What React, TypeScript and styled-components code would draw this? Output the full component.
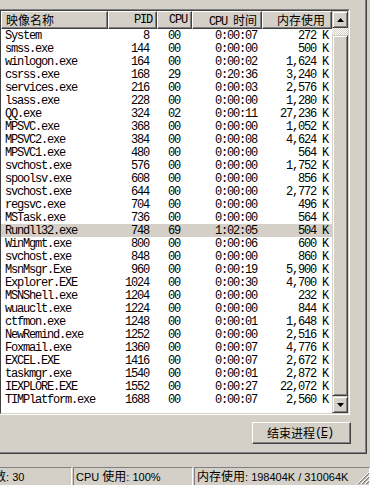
import React from "react";
import styled, { createGlobalStyle } from "styled-components";

const MONO = `"Liberation Mono", "DejaVu Sans Mono", monospace`;
const CJK = `"Noto Sans CJK SC", "Noto Sans", sans-serif`;
const SANS = `"Liberation Sans", "Noto Sans CJK SC", sans-serif`;

const GlobalStyle = createGlobalStyle`
  html, body { margin: 0; padding: 0; }
  body {
    width: 370px;
    height: 485px;
    overflow: hidden;
    background: #d4d0c8;
    font-family: ${MONO};
    color: #000;
  }
  * { box-sizing: border-box; }
`;

const Window = styled.div`
  width: 370px;
  height: 485px;
  display: flex;
  flex-direction: column;
  background: #d4d0c8;
  overflow: hidden;
`;

const TabFrame = styled.div`
  margin-right: 3px;
  border-right: 1px solid #404040;
  border-bottom: 1px solid #404040;
`;

const TabPage = styled.div`
  border-right: 1px solid #808080;
  border-bottom: 1px solid #808080;
  padding: 9px 14px 8px 0;
  display: flex;
  flex-direction: column;
  align-items: flex-start;
`;

const ListOuter = styled.div`
  margin-left: -1px;
  width: 351px;
  border: 1px solid;
  border-color: #808080 #ffffff #ffffff #808080;
`;

const ListInner = styled.div`
  display: flex;
  border: 1px solid;
  border-color: #404040 #d4d0c8 #d4d0c8 #404040;
`;

const ListMain = styled.div`
  width: 331px;
  display: flex;
  flex-direction: column;
  background: #ffffff;
`;

const Header = styled.div`
  display: flex;
  height: 18px;
  background: #d4d0c8;
`;

const HeaderCell = styled.div<{ $w: number; $align: "left" | "right"; $pad: number }>`
  width: ${(p) => p.$w}px;
  flex: none;
  height: 18px;
  border-top: 1px solid #ffffff;
  border-left: 1px solid #ffffff;
  border-right: 1px solid #404040;
  border-bottom: 1px solid #404040;
  box-shadow: inset -1px -1px 0 #808080;
  text-align: ${(p) => p.$align};
  padding: 0 ${(p) => (p.$align === "right" ? p.$pad : 0)}px 0 ${(p) => (p.$align === "left" ? p.$pad : 0)}px;
  font-size: 12px;
  line-height: 16px;
  white-space: nowrap;
  overflow: hidden;
`;

const Lat = styled.span`
  font-family: ${MONO};
  font-size: 12px;
  letter-spacing: -1.2px;
`;

const Han = styled.span`
  font-family: ${CJK};
  font-size: 12px;
`;

const Body = styled.div`
  height: 384px;
  overflow: hidden;
  background: #ffffff;
`;

const Row = styled.div<{ $sel?: boolean }>`
  display: flex;
  height: 13px;
  background: ${(p) => (p.$sel ? "#d4d0c8" : "transparent")};
`;

const Cell = styled.div<{ $w: number; $align: "left" | "right"; $pad: number }>`
  width: ${(p) => p.$w}px;
  flex: none;
  text-align: ${(p) => p.$align};
  padding: 1px ${(p) => (p.$align === "right" ? p.$pad : 0)}px 0 ${(p) => (p.$align === "left" ? p.$pad : 0)}px;
  font-family: ${MONO};
  font-size: 12px;
  letter-spacing: -1.2px;
  line-height: 12px;
  white-space: nowrap;
  overflow: hidden;
`;

const ScrollBar = styled.div`
  width: 16px;
  display: flex;
  flex-direction: column;
`;

const raised = `
  background: #d4d0c8;
  border-top: 1px solid #d4d0c8;
  border-left: 1px solid #d4d0c8;
  border-right: 1px solid #404040;
  border-bottom: 1px solid #404040;
  box-shadow: inset 1px 1px 0 #ffffff, inset -1px -1px 0 #808080;
`;

const ArrowButton = styled.div`
  ${raised}
  height: 17px;
  flex: none;
  display: flex;
  align-items: center;
  justify-content: center;
`;

const Track = styled.div`
  height: 7px;
  flex: none;
  background-color: #d4d0c8;
  background-image: conic-gradient(#ffffff 25%, #d4d0c8 0 50%, #ffffff 0 75%, #d4d0c8 0);
  background-size: 2px 2px;
`;

const Thumb = styled.div`
  ${raised}
  flex: 1;
`;

const EndButton = styled.div`
  align-self: flex-end;
  margin-top: 7px;
  width: 99px;
  height: 22px;
  background: #d4d0c8;
  border-top: 1px solid #ffffff;
  border-left: 1px solid #ffffff;
  border-right: 1px solid #404040;
  border-bottom: 1px solid #404040;
  box-shadow: inset -1px -1px 0 #808080;
  display: flex;
  align-items: center;
  justify-content: center;
  padding-right: 3px;
  white-space: nowrap;
  line-height: 14px;
`;

const StatusBar = styled.div`
  position: relative;
  margin-top: auto;
  height: 20px;
  padding-top: 2px;
  display: flex;
  gap: 1px;
  margin-left: -33px;
`;

const Panel = styled.div<{ $w?: number }>`
  ${(p) => (p.$w ? `width: ${p.$w}px; flex: none;` : "flex: 1;")}
  height: 18px;
  border-top: 1px solid #808080;
  border-left: 1px solid #808080;
  border-right: 1px solid #ffffff;
  padding-left: 2px;
  font-family: ${SANS};
  font-size: 11px;
  line-height: 16px;
  white-space: nowrap;
  overflow: hidden;
`;

const Grip = styled.svg`
  position: absolute;
  right: 0;
  bottom: 0;
`;

type P = [string, string, string, string, string];

const rows: P[] = [
  ["System", "8", "00", "0:00:07", "272 K"],
  ["smss.exe", "144", "00", "0:00:00", "500 K"],
  ["winlogon.exe", "164", "00", "0:00:02", "1,624 K"],
  ["csrss.exe", "168", "29", "0:20:36", "3,240 K"],
  ["services.exe", "216", "00", "0:00:03", "2,576 K"],
  ["lsass.exe", "228", "00", "0:00:00", "1,280 K"],
  ["QQ.exe", "324", "02", "0:00:11", "27,236 K"],
  ["MPSVC.exe", "368", "00", "0:00:00", "1,052 K"],
  ["MPSVC2.exe", "384", "00", "0:00:08", "4,624 K"],
  ["MPSVC1.exe", "480", "00", "0:00:00", "564 K"],
  ["svchost.exe", "576", "00", "0:00:00", "1,752 K"],
  ["spoolsv.exe", "608", "00", "0:00:00", "856 K"],
  ["svchost.exe", "644", "00", "0:00:00", "2,772 K"],
  ["regsvc.exe", "704", "00", "0:00:00", "496 K"],
  ["MSTask.exe", "736", "00", "0:00:00", "564 K"],
  ["Rundll32.exe", "748", "69", "1:02:05", "504 K"],
  ["WinMgmt.exe", "800", "00", "0:00:06", "600 K"],
  ["svchost.exe", "848", "00", "0:00:00", "860 K"],
  ["MsnMsgr.Exe", "960", "00", "0:00:19", "5,900 K"],
  ["Explorer.EXE", "1024", "00", "0:00:30", "4,700 K"],
  ["MSNShell.exe", "1204", "00", "0:00:00", "232 K"],
  ["wuauclt.exe", "1224", "00", "0:00:00", "844 K"],
  ["ctfmon.exe", "1248", "00", "0:00:01", "1,648 K"],
  ["NewRemind.exe", "1252", "00", "0:00:00", "2,516 K"],
  ["Foxmail.exe", "1360", "00", "0:00:07", "4,776 K"],
  ["EXCEL.EXE", "1416", "00", "0:00:07", "2,672 K"],
  ["taskmgr.exe", "1540", "00", "0:00:01", "2,872 K"],
  ["IEXPLORE.EXE", "1552", "00", "0:00:27", "22,072 K"],
  ["TIMPlatform.exe", "1688", "00", "0:00:07", "2,560 K"],
];

const UpArrow = () => (
  <svg width="7" height="4" viewBox="0 0 7 4">
    <polygon points="3.5,0 7,4 0,4" fill="#000" />
  </svg>
);
const DownArrow = () => (
  <svg width="7" height="4" viewBox="0 0 7 4">
    <polygon points="0,0 7,0 3.5,4" fill="#000" />
  </svg>
);

export default function App() {
  return (
    <Window>
      <GlobalStyle />
      <TabFrame>
        <TabPage>
          <ListOuter>
            <ListInner>
              <ListMain>
                <Header>
                  <HeaderCell $w={107} $align="left" $pad={4}>
                    <Han>映像名称</Han>
                  </HeaderCell>
                  <HeaderCell $w={49} $align="right" $pad={4}>
                    <Lat>PID</Lat>
                  </HeaderCell>
                  <HeaderCell $w={35} $align="right" $pad={4}>
                    <Lat>CPU</Lat>
                  </HeaderCell>
                  <HeaderCell $w={70} $align="right" $pad={4}>
                    <Lat>CPU </Lat>
                    <Han>时间</Han>
                  </HeaderCell>
                  <HeaderCell $w={70} $align="right" $pad={6}>
                    <Han>内存使用</Han>
                  </HeaderCell>
                </Header>
                <Body>
                  {rows.map((r, i) => (
                    <Row key={i} $sel={r[0] === "Rundll32.exe"}>
                      <Cell $w={107} $align="left" $pad={4}>{r[0]}</Cell>
                      <Cell $w={49} $align="right" $pad={8}>{r[1]}</Cell>
                      <Cell $w={35} $align="left" $pad={11}>{r[2]}</Cell>
                      <Cell $w={70} $align="right" $pad={5}>{r[3]}</Cell>
                      <Cell $w={70} $align="right" $pad={4}>{r[4]}</Cell>
                    </Row>
                  ))}
                </Body>
              </ListMain>
              <ScrollBar>
                <ArrowButton>
                  <UpArrow />
                </ArrowButton>
                <Track />
                <Thumb />
                <ArrowButton>
                  <DownArrow />
                </ArrowButton>
              </ScrollBar>
            </ListInner>
          </ListOuter>
          <EndButton>
            <Han>结束进程</Han>
            <Lat>
              (<u>E</u>)
            </Lat>
          </EndButton>
        </TabPage>
      </TabFrame>
      <StatusBar>
        <Panel $w={105}>
          <Han>进程数</Han>: 30
        </Panel>
        <Panel $w={120}>
          CPU <Han>使用</Han>: 100%
        </Panel>
        <Panel>
          <Han>内存使用</Han>: 198404K / 310064K
        </Panel>
        <Grip width="13" height="13" viewBox="0 0 13 13">
          <path d="M12 1 L1 12 M12 5 L5 12 M12 9 L9 12" stroke="#808080" strokeWidth="1.5" />
          <path d="M12 0 L0 12 M12 4 L4 12 M12 8 L8 12" stroke="#ffffff" strokeWidth="1" />
        </Grip>
      </StatusBar>
    </Window>
  );
}
